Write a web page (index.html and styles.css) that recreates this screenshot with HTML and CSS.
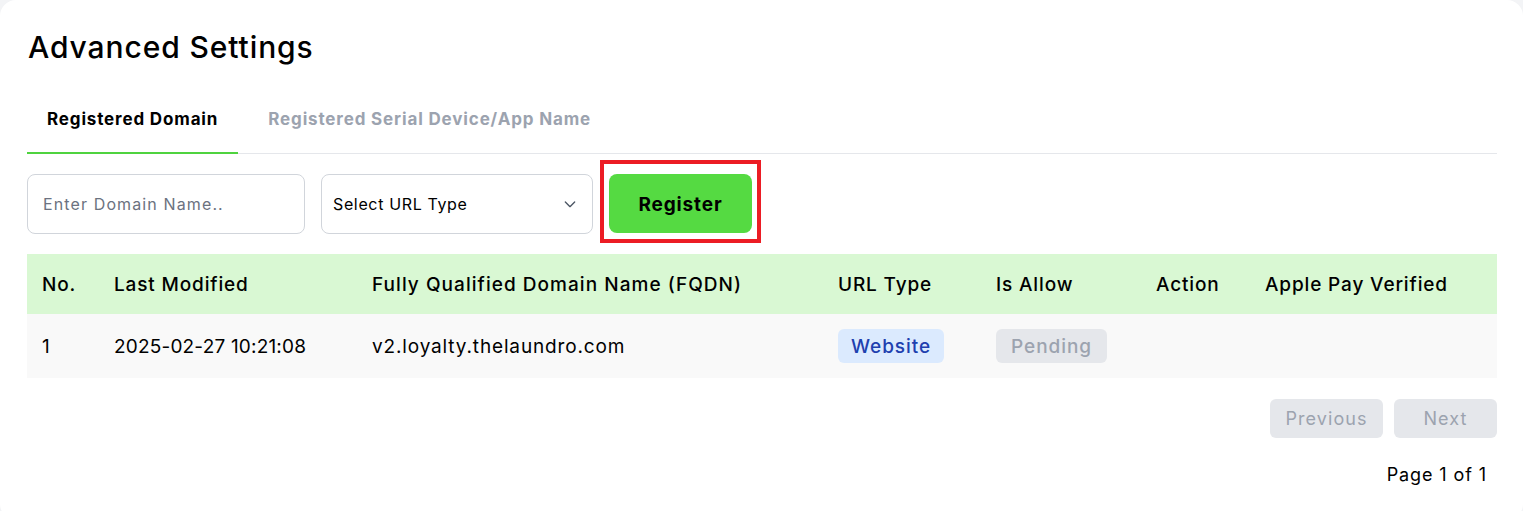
FILE: index.html
```html
<!DOCTYPE html>
<html lang="en">
<head>
    <meta charset="UTF-8">
    <meta name="viewport" content="width=device-width, initial-scale=1.0">
    <title>Advanced Settings</title>
    <link rel="stylesheet" href="styles.css">
</head>
<body>
    <div class="card">
        <h1 class="title">Advanced Settings</h1>

        <div class="tabs">
            <button class="tab active">Registered Domain</button>
            <button class="tab">Registered Serial Device/App Name</button>
        </div>

        <div class="controls">
            <input class="domain-input" type="text" placeholder="Enter Domain Name..">
            <div class="select-box">
                <span>Select URL Type</span>
                <svg class="chevron" width="16" height="16" viewBox="0 0 24 24" fill="none" stroke="#4b5563" stroke-width="2" stroke-linecap="round" stroke-linejoin="round"><path d="M5 9l7 7 7-7"/></svg>
            </div>
            <div class="register-wrap">
                <button class="register">Register</button>
                <div class="highlight"></div>
            </div>
        </div>

        <table class="domains">
            <colgroup>
                <col style="width: 72px">
                <col style="width: 258px">
                <col style="width: 466px">
                <col style="width: 158px">
                <col style="width: 160px">
                <col style="width: 109px">
                <col style="width: 247px">
            </colgroup>
            <thead>
                <tr>
                    <th>No.</th>
                    <th>Last Modified</th>
                    <th class="wide">Fully Qualified Domain Name (FQDN)</th>
                    <th>URL Type</th>
                    <th>Is Allow</th>
                    <th>Action</th>
                    <th>Apple Pay Verified</th>
                </tr>
            </thead>
            <tbody>
                <tr>
                    <td>1</td>
                    <td class="date">2025-02-27 10:21:08</td>
                    <td>v2.loyalty.thelaundro.com</td>
                    <td><span class="badge website">Website</span></td>
                    <td><span class="badge pending">Pending</span></td>
                    <td></td>
                    <td></td>
                </tr>
            </tbody>
        </table>

        <div class="pagination">
            <button class="page-btn prev" disabled>Previous</button>
            <button class="page-btn next" disabled>Next</button>
        </div>
        <div class="page-info">Page 1 of 1</div>
    </div>
</body>
</html>
```

FILE: styles.css
```css
body {
    font-family: Inter, "Noto Sans", sans-serif;
    margin: 0;
    background-color: #f3f4f6;
    color: #000;
}

.card {
    background: #fff;
    border-radius: 16px;
    padding: 26px 26px 30px 27px;
    min-height: 520px;
    box-sizing: border-box;
}

.title {
    font-size: 30px;
    font-weight: 500;
    line-height: 42px;
    letter-spacing: 0.03em;
    margin: 0 0 18px 1px;
}

.tabs {
    display: flex;
    gap: 10px;
    border-bottom: 1px solid #e5e7eb;
}

.tab {
    font-family: inherit;
    font-size: 17px;
    font-weight: 700;
    line-height: 24px;
    letter-spacing: 0.05em;
    padding: 21px 20px 21px;
    background: none;
    border: none;
    border-bottom: 2px solid transparent;
    margin-bottom: -1px;
    color: #9ca3af;
    cursor: pointer;
}

.tab.active {
    color: #000;
    border-bottom-color: #4fd33f;
}

.controls {
    display: flex;
    gap: 16px;
    margin-top: 20px;
    height: 60px;
}

.domain-input {
    width: 278px;
    box-sizing: border-box;
    border: 1px solid #d1d5db;
    border-radius: 8px;
    padding: 0 15px;
    font-family: inherit;
    font-size: 16px;
    letter-spacing: 0.07em;
    color: #000;
}

.domain-input::placeholder {
    color: #6b7280;
}

.select-box {
    width: 272px;
    box-sizing: border-box;
    border: 1px solid #d1d5db;
    border-radius: 8px;
    padding: 0 14px 0 11px;
    display: flex;
    align-items: center;
    justify-content: space-between;
    font-size: 16px;
    letter-spacing: 0.04em;
}

.register-wrap {
    position: relative;
}

.register {
    width: 143px;
    height: 59px;
    padding-top: 2px;
    background: #55da42;
    border: none;
    border-radius: 8px;
    font-family: inherit;
    font-size: 19px;
    font-weight: 700;
    letter-spacing: 0.045em;
    color: #000;
    cursor: pointer;
}

.highlight {
    position: absolute;
    left: -9px;
    top: -14px;
    width: 161px;
    height: 83px;
    box-sizing: border-box;
    border: 4px solid #ec1c24;
    pointer-events: none;
}

.domains {
    width: 1470px;
    margin-top: 20px;
    border-collapse: collapse;
    table-layout: fixed;
    font-size: 19px;
    letter-spacing: 0.045em;
}

.domains th {
    background: #d9f8d3;
    height: 60px;
    padding: 0 15px;
    text-align: left;
    font-weight: 500;
}

.domains th.wide {
    letter-spacing: 0.055em;
}

.domains td {
    background: #f9f9f9;
    height: 64px;
    padding: 0 15px;
}

.domains td.date {
    letter-spacing: 0.01em;
}

.badge {
    display: inline-block;
    height: 34px;
    line-height: 35px;
    padding: 0 13px;
    border-radius: 6px;
    font-weight: 500;
    letter-spacing: 0.05em;
}

.badge.website {
    background: #dbeafe;
    color: #1e40af;
}

.badge.pending {
    background: #e5e7eb;
    color: #9ca3af;
    padding: 0 15px;
}

.pagination {
    display: flex;
    justify-content: flex-end;
    gap: 11px;
    margin-top: 21px;
}

.page-btn {
    height: 39px;
    padding: 0;
    border: none;
    border-radius: 6px;
    background: #e5e7eb;
    color: #9ca3af;
    font-family: inherit;
    font-size: 18px;
    letter-spacing: 0.06em;
}

.page-btn.prev {
    width: 113px;
}

.page-btn.next {
    width: 103px;
}

.page-info {
    text-align: right;
    font-size: 18px;
    letter-spacing: 0.05em;
    margin-top: 26px;
    padding-right: 10px;
}
```
